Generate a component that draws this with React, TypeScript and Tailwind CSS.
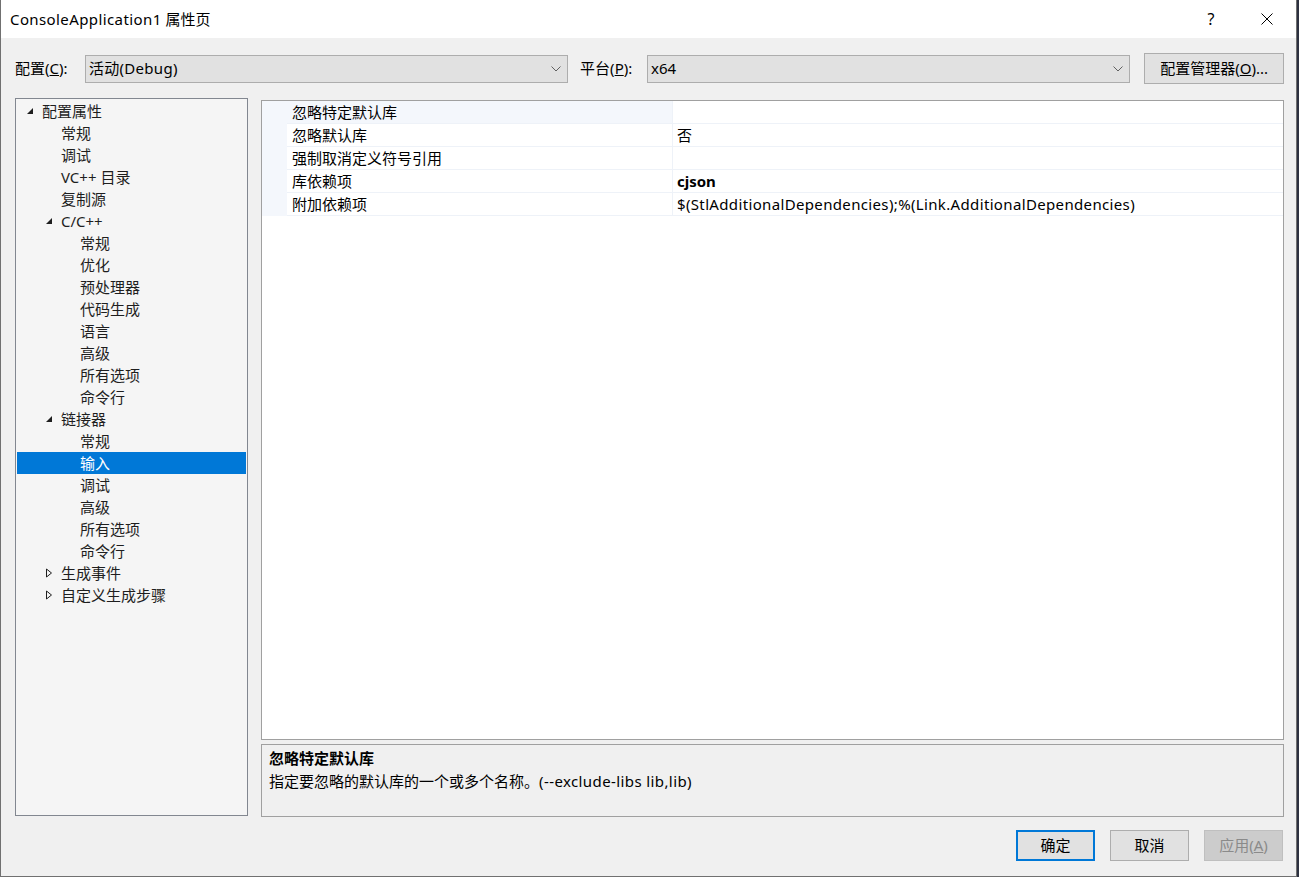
import React from "react";

type TreeItem = { label: string; level: number; arrow?: "open" | "closed"; selected?: boolean };

const tree: TreeItem[] = [
  { label: "配置属性", level: 0, arrow: "open" },
  { label: "常规", level: 1 },
  { label: "调试", level: 1 },
  { label: "VC++ 目录", level: 1 },
  { label: "复制源", level: 1 },
  { label: "C/C++", level: 1, arrow: "open" },
  { label: "常规", level: 2 },
  { label: "优化", level: 2 },
  { label: "预处理器", level: 2 },
  { label: "代码生成", level: 2 },
  { label: "语言", level: 2 },
  { label: "高级", level: 2 },
  { label: "所有选项", level: 2 },
  { label: "命令行", level: 2 },
  { label: "链接器", level: 1, arrow: "open" },
  { label: "常规", level: 2 },
  { label: "输入", level: 2, selected: true },
  { label: "调试", level: 2 },
  { label: "高级", level: 2 },
  { label: "所有选项", level: 2 },
  { label: "命令行", level: 2 },
  { label: "生成事件", level: 1, arrow: "closed" },
  { label: "自定义生成步骤", level: 1, arrow: "closed" },
];

const props: { name: string; value: string; bold?: boolean }[] = [
  { name: "忽略特定默认库", value: "" },
  { name: "忽略默认库", value: "否" },
  { name: "强制取消定义符号引用", value: "" },
  { name: "库依赖项", value: "cjson", bold: true },
  { name: "附加依赖项", value: "$(StlAdditionalDependencies);%(Link.AdditionalDependencies)" },
];

function Chevron() {
  return (
    <svg width="10" height="6" viewBox="0 0 10 6" className="shrink-0">
      <path d="M0.5 0.5 L5 5 L9.5 0.5" fill="none" stroke="#606060" strokeWidth="1" />
    </svg>
  );
}

function Arrow({ kind }: { kind: "open" | "closed" }) {
  if (kind === "open") {
    return (
      <svg width="8" height="8" viewBox="0 0 8 8">
        <path d="M7 1 L7 7 L1 7 Z" fill="#1e1e1e" />
      </svg>
    );
  }
  return (
    <svg width="8" height="10" viewBox="0 0 8 10">
      <path d="M1.5 1 L6.5 5 L1.5 9 Z" fill="none" stroke="#1e1e1e" strokeWidth="1" />
    </svg>
  );
}

export default function App() {
  const indent = [41, 60, 79];
  const arrowX = [25, 44, 44];
  return (
    <div className="w-[1299px] h-[877px] bg-[#2d3140] font-['Segoe_UI','Noto_Sans','Noto_Sans_CJK_SC',sans-serif] text-[15px] text-black">
      <div className="w-[1297px] h-[877px] flex flex-col bg-[#f0f0f0] border-l border-r border-b border-[#707070]">
        {/* title bar */}
        <div className="h-[38px] shrink-0 bg-white flex items-center pl-[9px]">
          <div className="flex-1 leading-none pt-[1px]">
            <span className="tracking-[0.4px]">ConsoleApplication1</span> 属性页
          </div>
          <div className="w-[46px] flex justify-center text-[16px] leading-none mr-[10px]">?</div>
          <div className="w-[46px] flex justify-center mr-[6px]">
            <svg width="12" height="12" viewBox="0 0 12 12">
              <path d="M0.5 0.5 L11.5 11.5 M11.5 0.5 L0.5 11.5" stroke="#000" strokeWidth="1" />
            </svg>
          </div>
        </div>

        {/* config row */}
        <div className="h-[31px] mt-[15px] flex items-center pl-[14px] pr-[12px] shrink-0">
          <div className="w-[70px]">
            配置(<span className="underline">C</span>):
          </div>
          <div className="w-[484px] h-[28px] bg-[#e1e1e1] border border-[#adadad] flex items-center pl-[3px] pr-[6px]">
            <span className="flex-1 tracking-[0.3px]">活动(Debug)</span>
            <Chevron />
          </div>
          <div className="w-[79px] pl-[12px]">
            平台(<span className="underline">P</span>):
          </div>
          <div className="w-[484px] h-[28px] bg-[#e1e1e1] border border-[#adadad] flex items-center pl-[3px] pr-[6px]">
            <span className="flex-1">x64</span>
            <Chevron />
          </div>
          <div className="ml-[14px] w-[140px] h-[31px] bg-[#e1e1e1] border border-[#adadad] flex items-center justify-center">
            配置管理器(<span className="underline">O</span>)...
          </div>
        </div>

        {/* main area */}
        <div className="flex mt-[14px] pl-[14px] pr-[12px] shrink-0">
          <div className="w-[233px] h-[718px] border border-[#828790] bg-[#f5f5f5] p-[1px]">
            {tree.map((t, i) => (
              <div
                key={i}
                className={
                  "h-[22px] relative flex items-center " +
                  (t.selected ? "bg-[#0078d7] text-white" : "text-[#1e1e1e]")
                }
              >
                {t.arrow && (
                  <div
                    className="absolute top-0 h-[22px] flex items-center"
                    style={{ left: arrowX[t.level] - 16 }}
                  >
                    <Arrow kind={t.arrow} />
                  </div>
                )}
                <span className="absolute leading-none" style={{ left: indent[t.level] - 16 }}>
                  {t.label}
                </span>
              </div>
            ))}
          </div>

          <div className="ml-[13px] flex-1 flex flex-col pt-[2px]">
            <div className="h-[640px] border border-[#a0a0a0] bg-white">
              {props.map((p, i) => (
                <div key={i} className="h-[23px] flex">
                  <div className="w-[25px] bg-[#f4f7fc]" />
                  <div
                    className={
                      "w-[386px] border-b border-r border-[#eef2f8] flex items-center pl-[5px] pt-[1px] " +
                      (i === 0 ? "bg-[#f4f7fc]" : "bg-white")
                    }
                  >
                    {p.name}
                  </div>
                  <div
                    className={
                      "flex-1 border-b border-[#eef2f8] flex items-center pl-[4px] pt-[1px] " +
                      (p.bold ? "font-bold" : "tracking-[0.35px]")
                    }
                  >
                    {p.value}
                  </div>
                </div>
              ))}
            </div>
            <div className="mt-[4px] h-[73px] border border-[#a0a0a0] bg-[#f0f0f0] px-[7px] pt-[2px]">
              <div className="h-[23px] flex items-center font-bold">忽略特定默认库</div>
              <div className="h-[23px] flex items-center">
                指定要忽略的默认库的一个或多个名称。<span className="tracking-[0.4px]">(--exclude-libs lib,lib)</span>
              </div>
            </div>
          </div>
        </div>

        {/* buttons */}
        <div className="flex justify-end gap-[15px] pr-[13px] mt-[13px]">
          <div className="w-[79px] h-[31px] bg-[#e1e1e1] border-2 border-[#0078d7] flex items-center justify-center">确定</div>
          <div className="w-[79px] h-[31px] bg-[#e1e1e1] border border-[#adadad] flex items-center justify-center">取消</div>
          <div className="w-[79px] h-[31px] bg-[#cccccc] border border-[#bfbfbf] text-[#8a8a8a] flex items-center justify-center">
            应用(<span className="underline">A</span>)
          </div>
        </div>
      </div>
    </div>
  );
}
